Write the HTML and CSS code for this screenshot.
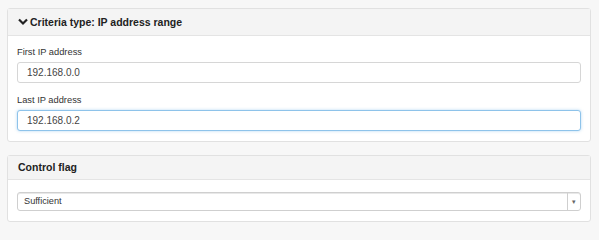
FILE: index.html
```html
<!DOCTYPE html>
<html lang="en">
<head>
<meta charset="utf-8">
<link rel="stylesheet" href="styles.css">
</head>
<body>
<div class="panel">
    <div class="panel-heading">
        <svg class="chevron" width="10" height="8" viewBox="0 0 10 8"><path d="M1 1.5 L5 5.5 L9 1.5" fill="none" stroke="#222" stroke-width="2.2"/></svg>
        Criteria type: IP address range
    </div>
    <div class="panel-body">
        <div class="form-group">
            <label>First IP address</label>
            <input type="text" class="form-control" value="192.168.0.0">
        </div>
        <div class="form-group last">
            <label>Last IP address</label>
            <input type="text" class="form-control focused" value="192.168.0.2">
        </div>
    </div>
</div>

<div class="panel">
    <div class="panel-heading short">Control flag</div>
    <div class="panel-body flag-body">
        <div class="select">
            <span class="select-value">Sufficient</span>
            <span class="select-arrow">&#9662;</span>
        </div>
    </div>
</div>
</body>
</html>
```

FILE: styles.css
```css
body {
    font-family: "Liberation Sans", Arial, sans-serif;
    background-color: #f7f7f7;
    margin: 0;
    padding: 8px 8px 0 7px;
    color: #333;
}

.panel {
    background-color: #fff;
    border: 1px solid #e1e1e1;
    border-radius: 3px;
    margin-bottom: 13px;
}

.panel-heading {
    background-color: #f4f4f4;
    border-bottom: 1px solid #e4e4e4;
    height: 26px;
    line-height: 26px;
    padding: 0 10px;
    font-size: 10.5px;
    font-weight: bold;
    color: #222;
    display: flex;
    align-items: center;
}

.panel-heading.short {
    height: 23px;
    line-height: 23px;
}

.chevron {
    margin-right: 2px;
}

.panel-body {
    padding: 9px 9px 10px 9px;
}

.form-group {
    margin-bottom: 10px;
}

.form-group.last {
    margin-bottom: 0;
}

label {
    display: block;
    font-size: 9.3px;
    line-height: 14px;
    color: #333;
    margin-bottom: 3px;
}

.form-control {
    display: block;
    box-sizing: border-box;
    width: 100%;
    height: 21px;
    padding: 0 9px;
    font-family: "Liberation Sans", Arial, sans-serif;
    font-size: 10px;
    color: #444;
    border: 1px solid #d6d6d6;
    border-radius: 3px;
    background: #fff;
    outline: none;
}

.form-control.focused {
    border-color: #8ec3ea;
    box-shadow: 0 0 3px rgba(102, 175, 233, 0.5);
}

.flag-body {
    padding-top: 12px;
}

.select {
    display: flex;
    box-sizing: border-box;
    height: 19px;
    border: 1px solid #cfcfcf;
    border-radius: 3px;
    box-shadow: inset 0 1px 0 #e8e8e8;
    font-size: 9.2px;
    color: #333;
}

.select-value {
    flex: 1;
    line-height: 17px;
    padding-left: 6px;
}

.select-arrow {
    width: 12px;
    border-left: 1px solid #cfcfcf;
    font-size: 7px;
    line-height: 17px;
    text-align: center;
    color: #666;
}
```
